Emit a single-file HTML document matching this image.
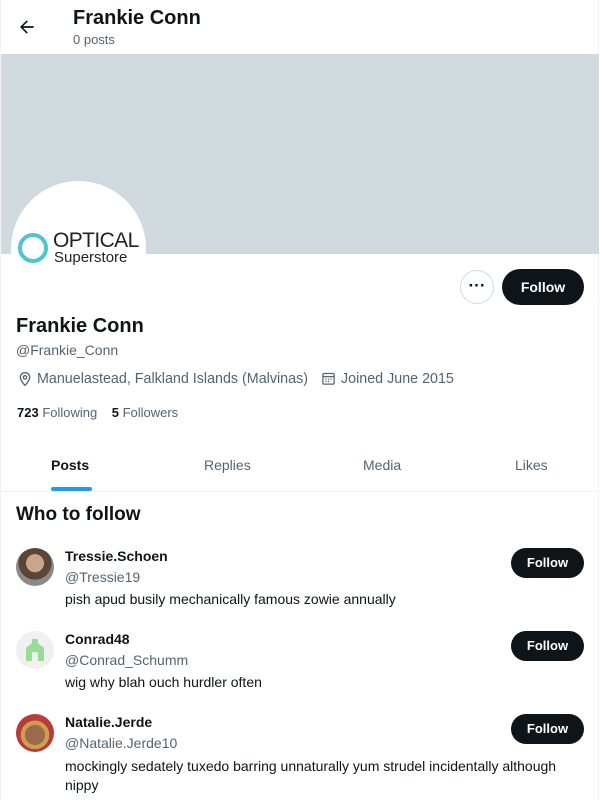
<!DOCTYPE html>
<html><head><meta charset="utf-8"><style>
*{margin:0;padding:0;box-sizing:border-box}
body{width:600px;height:800px;overflow:hidden;background:#fff;font-family:"Liberation Sans",sans-serif;color:#0f1419;position:relative}
.frame{position:absolute;left:0;top:0;width:599px;height:800px;border-left:1px solid #eff3f4;border-right:1px solid #eff3f4}
.abs{position:absolute}
.gray{color:#536471}
.btn{position:absolute;background:#0f1419;color:#fff;font-weight:bold;border-radius:18px;text-align:center}
.av{position:absolute;left:16px;width:38px;height:38px;border-radius:50%;overflow:hidden}
</style></head><body>
<div class="frame"></div>
<svg class="abs" style="left:17px;top:17px" width="20" height="20" viewBox="0 0 24 24"><path d="M7.4 11l5.6-5.6L11.6 4 3.6 12l8 8 1.4-1.4L7.4 13H20v-2z" fill="#0f1419"/></svg>
<div class="abs" style="left:73px;top:7px;font-size:20px;font-weight:bold">Frankie Conn</div>
<div class="abs gray" style="left:73px;top:32px;font-size:13px">0 posts</div>
<div class="abs" style="left:1px;top:54px;width:598px;height:200px;background:#cfd9de"></div>
<div class="abs" style="left:11px;top:181px;width:135px;height:135px;border-radius:50%;background:#fff"></div>
<div class="abs" style="left:18px;top:233px;width:30px;height:30px;border-radius:50%;border:4px solid #4fc3d0"></div>
<div class="abs" style="left:53px;top:229px;font-size:21px;color:#222;letter-spacing:-0.6px">OPTICAL</div>
<div class="abs" style="left:54px;top:249px;font-size:15px;color:#222">Superstore</div>
<div class="abs" style="left:1px;top:254px;width:10px;height:50px;background:#fff"></div>
<div class="abs" style="left:460px;top:270px;width:34px;height:34px;border:1px solid #cfd9de;border-radius:50%;text-align:center;font-weight:bold;font-size:17px;line-height:30px">···</div>
<div class="btn" style="left:502px;top:269px;width:82px;height:36px;line-height:36px;font-size:14px">Follow</div>
<div class="abs" style="left:16px;top:315px;font-size:20px;font-weight:bold">Frankie Conn</div>
<div class="abs gray" style="left:16px;top:342px;font-size:14px">@Frankie_Conn</div>
<svg class="abs" style="left:17px;top:371px" width="16" height="16" viewBox="0 0 24 24"><path d="M12 2.5c-4 0-7 3-7 7 0 5 7 12 7 12s7-7 7-12c0-4-3-7-7-7z" fill="none" stroke="#536471" stroke-width="2"/><circle cx="12" cy="9.5" r="2.5" fill="none" stroke="#536471" stroke-width="2"/></svg>
<div class="abs gray" style="left:37px;top:371px;font-size:14.3px">Manuelastead, Falkland Islands (Malvinas)</div>
<svg class="abs" style="left:321px;top:371px" width="15" height="15" viewBox="0 0 24 24"><rect x="3" y="4" width="18" height="17" rx="2" fill="none" stroke="#536471" stroke-width="2"/><path d="M3 9h18" stroke="#536471" stroke-width="2"/><path d="M7 13h2M11 13h2M15 13h2M7 17h2M11 17h2" stroke="#536471" stroke-width="2"/></svg>
<div class="abs gray" style="left:341px;top:371px;font-size:14.3px">Joined June 2015</div>
<div class="abs" style="left:17px;top:405px;font-size:13px"><b>723</b> <span class="gray">Following</span> &nbsp;&nbsp;&nbsp;<b>5</b> <span class="gray">Followers</span></div>
<div class="abs" style="left:51px;top:457px;font-size:14px;font-weight:bold">Posts</div>
<div class="abs" style="left:51px;top:487px;width:41px;height:4px;border-radius:2px;background:#1d9bf0"></div>
<div class="abs gray" style="left:204px;top:457px;font-size:14px">Replies</div>
<div class="abs gray" style="left:363px;top:457px;font-size:14px">Media</div>
<div class="abs gray" style="left:515px;top:457px;font-size:14px">Likes</div>
<div class="abs" style="left:1px;top:491px;width:598px;height:1px;background:#eff3f4"></div>
<div class="abs" style="left:16px;top:504px;font-size:19px;font-weight:bold">Who to follow</div>

<div class="av" style="top:548px;background:radial-gradient(circle at 50% 40%,#c9a58c 0 30%,#5b4636 31% 55%,#8a8a88 56%)"></div>
<div class="abs" style="left:65px;top:548px;font-size:14px;font-weight:bold">Tressie.Schoen</div>
<div class="abs gray" style="left:65px;top:569px;font-size:14px">@Tressie19</div>
<div class="abs" style="left:65px;top:591px;font-size:14px">pish apud busily mechanically famous zowie annually</div>
<div class="btn" style="left:511px;top:548px;width:73px;height:30px;line-height:30px;font-size:13px">Follow</div>

<div class="av" style="top:631px;background:#f0f0f0"><div style="position:absolute;left:10px;top:8px;width:18px;height:22px;background:#98dc98;clip-path:polygon(33% 0,66% 0,66% 20%,100% 40%,100% 100%,66% 100%,66% 60%,33% 60%,33% 100%,0 100%,0 40%,33% 20%)"></div></div>
<div class="abs" style="left:65px;top:631px;font-size:14px;font-weight:bold">Conrad48</div>
<div class="abs gray" style="left:65px;top:652px;font-size:14px">@Conrad_Schumm</div>
<div class="abs" style="left:65px;top:674px;font-size:14px">wig why blah ouch hurdler often</div>
<div class="btn" style="left:511px;top:631px;width:73px;height:30px;line-height:30px;font-size:13px">Follow</div>

<div class="av" style="top:714px;background:radial-gradient(circle at 50% 55%,#9a6a4a 0 35%,#c9a050 36% 50%,#b83a3a 51%)"></div>
<div class="abs" style="left:65px;top:714px;font-size:14px;font-weight:bold">Natalie.Jerde</div>
<div class="abs gray" style="left:65px;top:735px;font-size:14px">@Natalie.Jerde10</div>
<div class="abs" style="left:65px;top:757px;font-size:14px;line-height:19px;width:520px">mockingly sedately tuxedo barring unnaturally yum strudel incidentally although nippy</div>
<div class="btn" style="left:511px;top:714px;width:73px;height:30px;line-height:30px;font-size:13px">Follow</div>
</body></html>
